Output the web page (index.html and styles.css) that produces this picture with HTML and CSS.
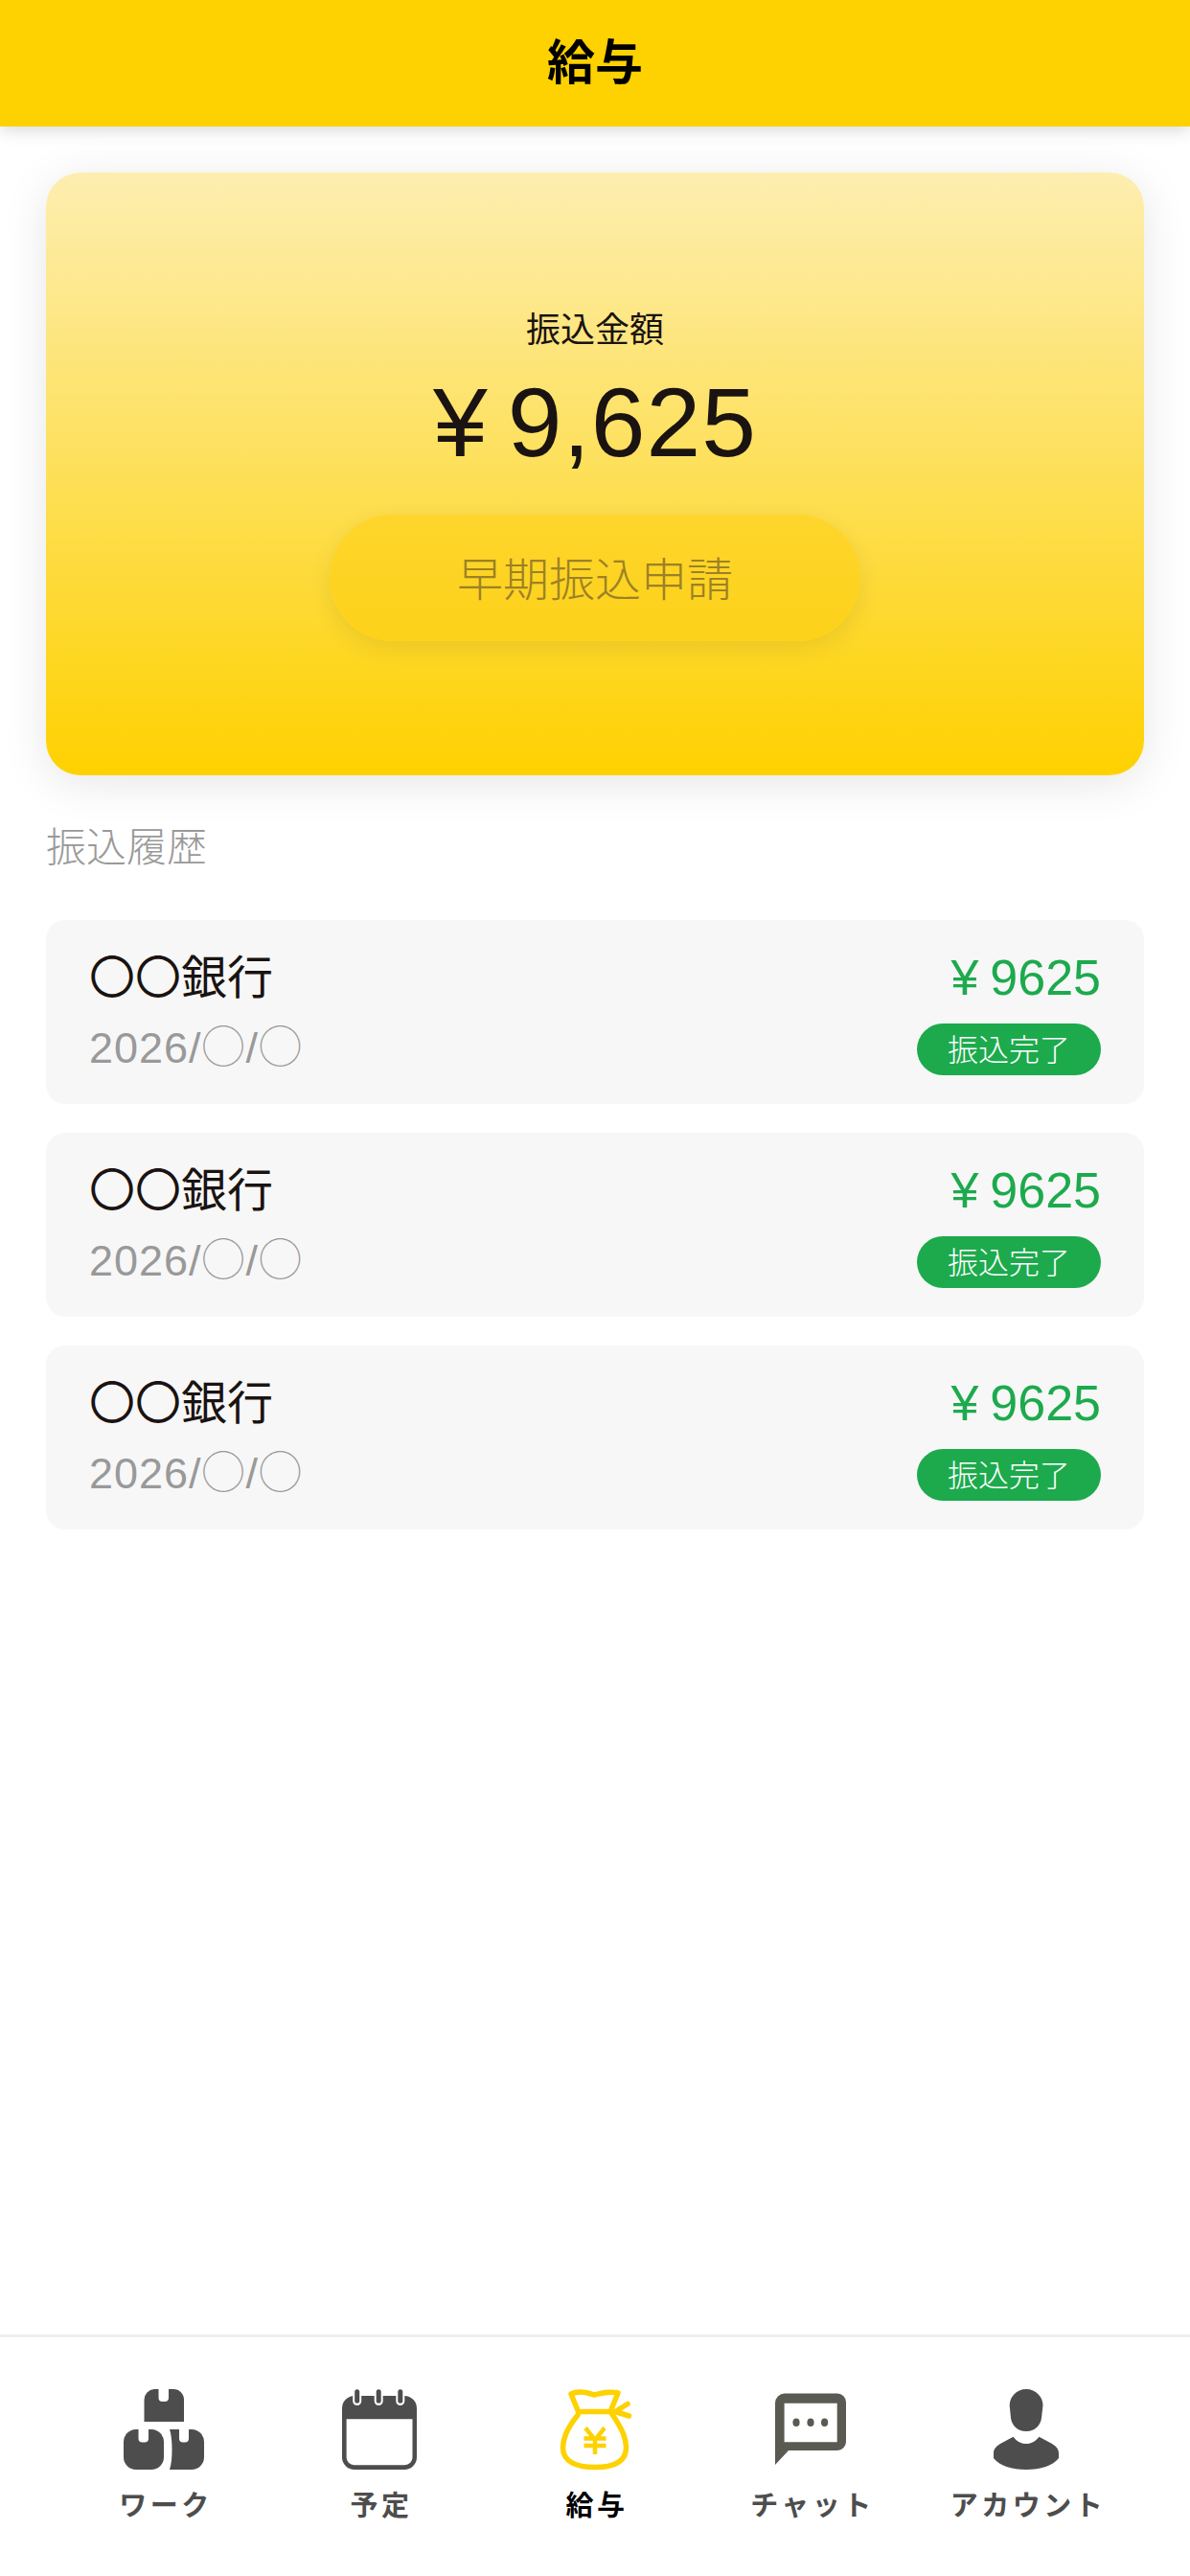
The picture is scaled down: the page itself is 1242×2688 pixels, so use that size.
FILE: index.html
```html
<!DOCTYPE html>
<html lang="ja">
<head>
    <meta charset="UTF-8">
    <meta name="viewport" content="width=device-width, initial-scale=1.0">
    <title>給与</title>
    <link rel="stylesheet" href="styles.css">
</head>
<body>
    <div class="app">
        <header class="top-bar">
            <h1>給与</h1>
        </header>

        <main class="content">
            <section class="summary-card">
                <p class="summary-label">振込金額</p>
                <p class="summary-amount">¥<span class="yen-gap"></span>9,625</p>
                <button type="button" class="early-button">早期振込申請</button>
            </section>

            <h2 class="section-title">振込履歴</h2>

            <ul class="history">
                <li class="history-row">
                    <div class="history-left">
                        <span class="bank-name">〇〇銀行</span>
                        <span class="transfer-date">2026/◯/◯</span>
                    </div>
                    <div class="history-right">
                        <span class="transfer-amount">¥<span class="yen-gap-small"></span>9625</span>
                        <span class="status-pill">振込完了</span>
                    </div>
                </li>
                <li class="history-row">
                    <div class="history-left">
                        <span class="bank-name">〇〇銀行</span>
                        <span class="transfer-date">2026/◯/◯</span>
                    </div>
                    <div class="history-right">
                        <span class="transfer-amount">¥<span class="yen-gap-small"></span>9625</span>
                        <span class="status-pill">振込完了</span>
                    </div>
                </li>
                <li class="history-row">
                    <div class="history-left">
                        <span class="bank-name">〇〇銀行</span>
                        <span class="transfer-date">2026/◯/◯</span>
                    </div>
                    <div class="history-right">
                        <span class="transfer-amount">¥<span class="yen-gap-small"></span>9625</span>
                        <span class="status-pill">振込完了</span>
                    </div>
                </li>
            </ul>
        </main>

        <nav class="tab-bar">
            <a class="tab">
                <svg class="tab-icon" viewBox="0 0 90 90">
                    <path fill="#4d4d4d" d="M35 3H39.5V12a4 4 0 0 0 4 4H46a4 4 0 0 0 4-4V3H55a11 11 0 0 1 11 11V37H24.5V14a11 11 0 0 1 10.500-11z"/>
                    <path fill="#4d4d4d" d="M16 45H18.5V54.500a4 4 0 0 0 4 4H25a4 4 0 0 0 4-4V45H32a13 13 0 0 1 13 13V74a13 13 0 0 1-13 13H16a13 13 0 0 1-13-13V58a13 13 0 0 1 13-13z"/>
                    <path fill="#4d4d4d" d="M51 45H61V54.500a4 4 0 0 0 4 4h2a4 4 0 0 0 4-4V45h3a13 13 0 0 1 13 13v16a13 13 0 0 1-13 13H51c2-6 2.500-14 2.500-21s-.5-15-2.500-21z"/>
                </svg>
                <span class="tab-label">ワーク</span>
            </a>
            <a class="tab">
                <svg class="tab-icon" viewBox="0 0 90 90">
                    <path fill="#4d4d4d" fill-rule="evenodd" d="M19 10H71a13 13 0 0 1 13 13V74a13 13 0 0 1-13 13H19a13 13 0 0 1-13-13V23a13 13 0 0 1 13-13zM10.600 34.300V74a8 8 0 0 0 8 8.300H71.500a8 8 0 0 0 8-8.300V34.300z"/>
                    <rect x="17.200" y="2" width="9" height="18" rx="4.500" fill="#ffffff"/>
                    <rect x="39.700" y="2" width="9" height="18" rx="4.500" fill="#ffffff"/>
                    <rect x="62.300" y="2" width="9" height="18" rx="4.500" fill="#ffffff"/>
                    <rect x="19.200" y="3.300" width="5" height="14.500" rx="2.500" fill="#4d4d4d"/>
                    <rect x="41.700" y="3.300" width="5" height="14.500" rx="2.500" fill="#4d4d4d"/>
                    <rect x="64.300" y="3.300" width="5" height="14.500" rx="2.500" fill="#4d4d4d"/>
                </svg>
                <span class="tab-label">予定</span>
            </a>
            <a class="tab tab-active">
                <svg class="tab-icon" viewBox="0 0 90 90">
                    <g fill="none" stroke="#fed100" stroke-width="5.500" stroke-linecap="round" stroke-linejoin="round">
                        <path d="M27 30C18 41 11.500 52 11.500 64C11.500 79 26 84.500 45 84.500C64 84.500 77.500 79 77.500 64C77.500 52 71 41 62 28"/>
                        <path d="M20 8C28 4 36 6 44 9C52 7 60 5 69 7L61 26.500H27.500z"/>
                        <path d="M61 26.500H66L79 18.500M66 26.500L80.500 31"/>
                    </g>
                    <path fill="none" stroke="#fed100" stroke-width="4.500" d="M35 43.500L45 56L55 43.500M45 56V71M33.500 54.500H56.500M33.500 62H56.500"/>
                </svg>
                <span class="tab-label">給与</span>
            </a>
            <a class="tab">
                <svg class="tab-icon" viewBox="0 0 90 90">
                    <path fill="#5a5a52" fill-rule="evenodd" d="M18 7.500H73a9 9 0 0 1 9 9V58a9 9 0 0 1-9 9H22L8 82V17.500a10 10 0 0 1 10-10zM17.600 17.700V58.300H72.700V17.700z"/>
                    <ellipse cx="30" cy="37.700" rx="3.600" ry="4.300" fill="#5a5a52"/>
                    <ellipse cx="45" cy="37.700" rx="3.600" ry="4.300" fill="#5a5a52"/>
                    <ellipse cx="59.600" cy="37.700" rx="3.600" ry="4.300" fill="#5a5a52"/>
                </svg>
                <span class="tab-label">チャット</span>
            </a>
            <a class="tab">
                <svg class="tab-icon" viewBox="0 0 90 90">
                    <path fill="#4d4d4d" d="M45 3C55 3 62.500 11 62.500 20L61 33C60 41 54 47 45 47C36 47 30 41 29 33L27.700 20C27.700 11 35 3 45 3z"/>
                    <path fill="#4d4d4d" d="M31.500 52.700C35 57 39 60 45 60C51 60 55 57 58.500 52.700L72 60C77 63 79 66 79 70V75C73 83 60 87 45 87C30 87 17 83 11 75V70C11 66 13 63 18 60z"/>
                </svg>
                <span class="tab-label">アカウント</span>
            </a>
        </nav>
    </div>
</body>
</html>
```

FILE: styles.css
```css
/* General */
* {
    box-sizing: border-box;
}

body {
    margin: 0;
    background-color: #ffffff;
    font-family: "Liberation Sans", "Noto Sans CJK JP", sans-serif;
    color: #1a1311;
}

.app {
    display: flex;
    flex-direction: column;
    height: 2688px;
}

/* Top bar */
.top-bar {
    position: relative;
    z-index: 1;
    height: 132px;
    flex-shrink: 0;
    display: flex;
    align-items: center;
    justify-content: center;
    background-color: #fed100;
    box-shadow: 0 4px 16px rgba(0, 0, 0, 0.15);
}

.top-bar h1 {
    margin: 0;
    font-size: 50px;
    line-height: 50px;
    font-weight: 700;
    color: #000000;
}

/* Main */
.content {
    flex: 1;
    padding: 48px 48px 0;
}

.summary-card {
    height: 629px;
    padding-top: 138px;
    display: flex;
    flex-direction: column;
    align-items: center;
    border-radius: 36px;
    background: linear-gradient(180deg, #fdeeb0 0%, #fed100 100%);
    box-shadow: 0 8px 48px rgba(0, 0, 0, 0.1);
}

.summary-label {
    margin: 0;
    font-size: 36px;
    line-height: 54px;
}

.summary-amount {
    margin: 4px 0 0;
    font-size: 102px;
    line-height: 130px;
    letter-spacing: 1px;
}

.yen-gap {
    display: inline-block;
    width: 20px;
}

.early-button {
    margin-top: 31px;
    padding: 0 0 5px;
    width: 554px;
    height: 132px;
    border: none;
    border-radius: 66px;
    background: linear-gradient(180deg, #fed52c 0%, #fdd21a 100%);
    box-shadow: 0 8px 24px rgba(0, 0, 0, 0.08);
    font-family: inherit;
    font-size: 48px;
    font-weight: 300;
    color: #9c8126;
}

.section-title {
    margin: 46px 0 0;
    font-size: 42px;
    line-height: 60px;
    font-weight: 300;
    color: #999999;
}

/* History */
.history {
    list-style: none;
    margin: 45px 0 0;
    padding: 0;
    display: flex;
    flex-direction: column;
    gap: 30px;
}

.history-row {
    height: 192px;
    padding: 26px 45px 0 45px;
    display: flex;
    justify-content: space-between;
    align-items: flex-start;
    border-radius: 20px;
    background-color: #f7f7f7;
}

.history-left {
    display: flex;
    flex-direction: column;
}

.bank-name {
    font-size: 48px;
    line-height: 70px;
}

.transfer-date {
    margin-top: 7px;
    font-size: 45px;
    line-height: 62px;
    font-weight: 300;
    letter-spacing: 1px;
    color: #999999;
}

.history-right {
    display: flex;
    flex-direction: column;
    align-items: flex-end;
}

.transfer-amount {
    font-size: 52px;
    line-height: 68px;
    color: #1caa4d;
}

.yen-gap-small {
    display: inline-block;
    width: 12px;
}

.status-pill {
    margin-top: 14px;
    padding-bottom: 4px;
    width: 192px;
    height: 54px;
    display: flex;
    align-items: center;
    justify-content: center;
    border-radius: 27px;
    background-color: #1caa4d;
    color: #ffffff;
    font-size: 32px;
    font-weight: 300;
}

/* Tab bar */
.tab-bar {
    height: 252px;
    flex-shrink: 0;
    padding-top: 51px;
    display: flex;
    justify-content: center;
    border-top: 3px solid #eeeeee;
}

.tab {
    width: 225px;
    display: flex;
    flex-direction: column;
    align-items: center;
    color: #4d4d4d;
}

.tab-icon {
    width: 90px;
    height: 90px;
}

.tab-label {
    margin-top: 13px;
    margin-right: -4px;
    font-size: 29px;
    line-height: 44px;
    font-weight: 700;
    letter-spacing: 3.5px;
}

.tab-active {
    color: #000000;
}
```
